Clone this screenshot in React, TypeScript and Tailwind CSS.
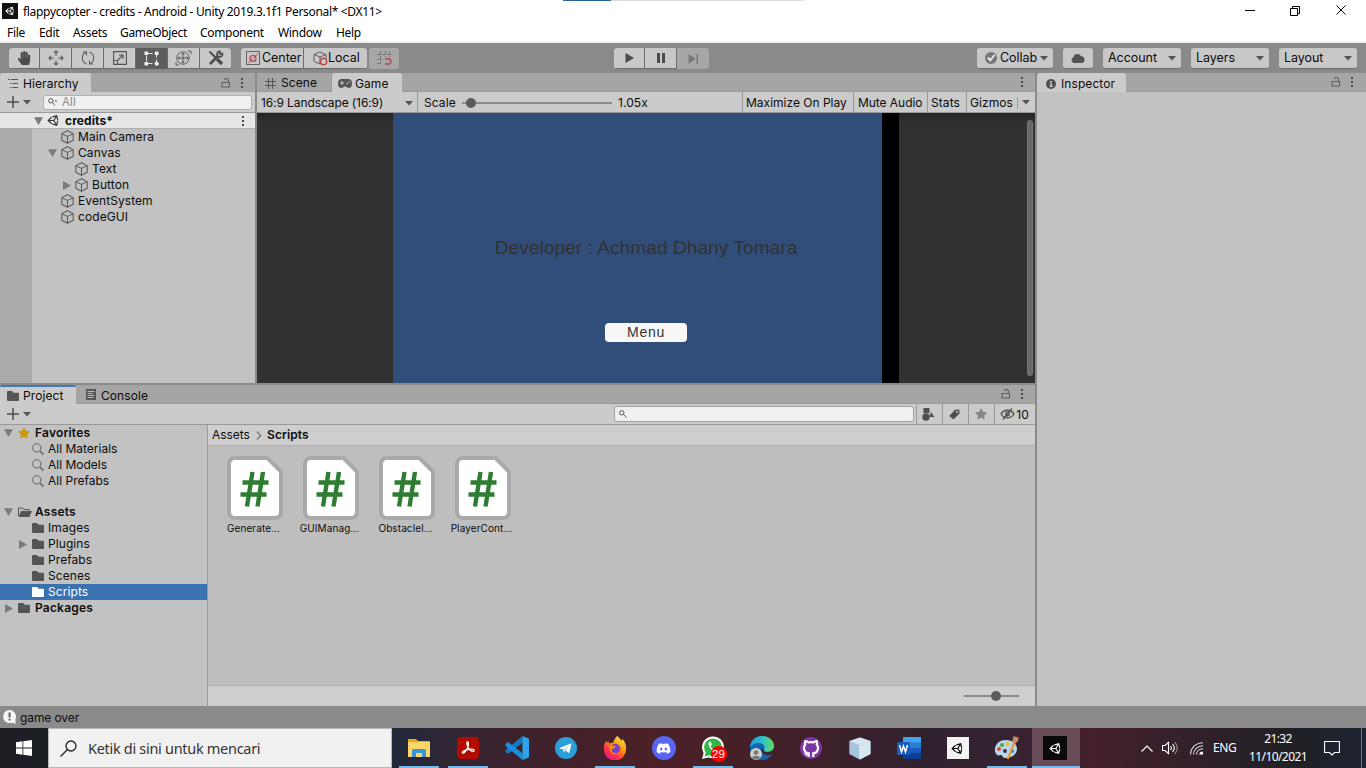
import React from "react";
import { FaUnity, FaHandPaper, FaDiscord, FaGithubAlt, FaStar } from "react-icons/fa";

type P = { className?: string };

const Tri = ({ className = "" }: P) => (
  <svg className={"shrink-0 " + className} width="8" height="5" viewBox="0 0 8 5"><path d="M0 0h8L4 4.6z" fill="#545454" /></svg>
);
const FoldOpen = ({ className = "" }: P) => (
  <svg className={"shrink-0 " + className} width="9" height="8" viewBox="0 0 9 8"><path d="M0 .3h9L4.5 8z" fill="#7a7a7a" /></svg>
);
const FoldClosed = ({ className = "" }: P) => (
  <svg className={"shrink-0 " + className} width="8" height="9" viewBox="0 0 8 9"><path d="M0 0v9l8-4.5z" fill="#7a7a7a" /></svg>
);
const Cube = ({ className = "" }: P) => (
  <svg className={"shrink-0 " + className} width="14" height="14" viewBox="0 0 14 14" fill="none" stroke="#575757" strokeWidth="1.05" strokeLinejoin="round">
    <path d="M7.5 .8l5.700 2.800v6.600L7.500 13.300 1.800 10.200V3.600zM1.800 3.600L7.500 6.400l5.700-2.800M7.500 6.400v6.900" />
  </svg>
);
const Folder = ({ white = false }: { white?: boolean }) => (
  <svg className="shrink-0" width="12" height="10" viewBox="0 0 12 10"><path d="M0 1a1 1 0 011-1h4.2l1.3 1.8H11a1 1 0 011 1V9a1 1 0 01-1 1H1a1 1 0 01-1-1z" fill={white ? "#fff" : "#555"} /></svg>
);
const FolderOpen = () => (
  <svg className="shrink-0" width="14" height="10" viewBox="0 0 14 10"><path d="M.5 9V1h4l1.2 1.5h5.3V4" fill="none" stroke="#555" /><path d="M3 4h11l-2.5 6H.5z" fill="#555" /></svg>
);
const Lock = ({ className = "" }: P) => (
  <svg className={"shrink-0 " + className} width="10" height="10" viewBox="0 0 10 10" fill="none" stroke="#616161" strokeWidth="1.1"><path d="M1 4.500h7.500v4.500H1zM7.500 4.500V2.500a2.200 2.200 0 00-4.300-.6" /></svg>
);
const Dots = ({ className = "" }: P) => (
  <svg className={"shrink-0 " + className} width="2" height="10" viewBox="0 0 2 10" fill="#4c4c4c"><path d="M0 0h2v2H0zM0 4h2v2H0zM0 8h2v2H0z" /></svg>
);
const PlusMenu = () => (
  <div className="flex w-[24px] items-center">
    <svg width="12" height="12" viewBox="0 0 12 12" stroke="#4f4f4f" strokeWidth="1.5"><path d="M6 0v12M0 6h12" /></svg>
    <Tri className="ml-1" />
  </div>
);
const Lens = ({ className = "" }: P) => (
  <svg className={"shrink-0 " + className} width="12" height="12" viewBox="0 0 12 12" fill="none" stroke="#636363"><circle cx="4.8" cy="4.8" r="4.2" /><path d="M8 8l3.6 3.6" strokeWidth="1.5" /></svg>
);

function TitleBar() {
  return (
    <div className="flex h-[43px] flex-col border-b-2 border-[#f0f0f0] bg-white text-black">
      <div className="flex h-[22px]">
        <div className="mt-[3px] ml-[2px] flex size-4 items-center justify-center bg-[#111] text-white"><FaUnity size={10} /></div>
        <span className="ml-[5px] w-[540px] pt-[3px] font-['Noto_Sans',sans-serif] text-[12px] leading-[18px] tracking-[-0.32px] whitespace-nowrap">
          flappycopter - credits - Android - Unity 2019.3.1f1 Personal* &lt;DX11&gt;
        </span>
        <div className="h-px w-[48px] bg-[#2a6396]" />
        <div className="h-px w-[193px] bg-[#dedede]" />
        <svg className="ml-[440px]" width="106" height="22" viewBox="0 0 106 22" fill="none" stroke="#000">
          <path d="M1 10.5h10M46.500 8.500h7v7h-7zM48.500 8V6.500h7v7H54M92.500 5.500l9 9M101.500 5.500l-9 9" />
        </svg>
      </div>
      <div className="flex h-[19px] pl-[7px] font-['Noto_Sans',sans-serif] text-[12px] leading-[21px] tracking-[-0.32px]">
        <span className="w-[32px]">File</span><span className="w-[34px]">Edit</span><span className="w-[47px]">Assets</span>
        <span className="w-[80px]">GameObject</span><span className="w-[78px]">Component</span><span className="w-[58px]">Window</span><span>Help</span>
      </div>
    </div>
  );
}

const btn = "flex h-[21px] items-center bg-[#c8c8c8] border-b border-[#6c6c6c] ";

function Toolbar() {
  return (
    <div className="flex h-[30px] items-start bg-[#8a8a8a] pt-[5px] text-[12.5px] tracking-[-0.05px]">
      <div className="ml-[9px] flex w-[222px] gap-px overflow-hidden rounded-[3px] bg-[#6c6c6c]">
        <div className={btn + "w-[30px] justify-center"}><FaHandPaper size={14} color="#4b4b4b" /></div>
        <div className={btn + "w-[31px] justify-center"}>
          <svg width="16" height="16" viewBox="0 0 16 16" fill="none" stroke="#5e5e5e" strokeWidth="1.100"><path d="M8 1v5M8 10v5M1 8h5M10 8h5M6 3l2-2 2 2M6 13l2 2 2-2M3 6L1 8l2 2M13 6l2 2-2 2" /></svg>
        </div>
        <div className={btn + "w-[31px] justify-center"}>
          <svg width="16" height="16" viewBox="0 0 16 16" fill="none" stroke="#5e5e5e" strokeWidth="1.1"><path d="M6.500 14C1 12 1 4.500 6.200 2M3 2h3.500v3.500M9.500 2c5.500 2 5.500 9.500.3 12M13 14H9.500v-3.500" /></svg>
        </div>
        <div className={btn + "w-[31px] justify-center"}>
          <svg width="14" height="14" viewBox="0 0 14 14" fill="none" stroke="#545454" strokeWidth="1.1"><path d="M.6.6h12.800v12.800H.600zM5 9l4.500-4.500M6 4h4v4M.6 9.500h4v4" /></svg>
        </div>
        <div className="flex h-[21px] w-[31px] items-center justify-center bg-[#5d5d5d]">
          <svg width="15" height="15" viewBox="0 0 15 15"><path d="M2.500 2.500h10v10h-10z" fill="none" stroke="#e4e4e4" strokeDasharray="6 2" /><path d="M.5.500h3.500v3.500H.500zM11 .5h3.500v3.500H11zM.5 11h3.500v3.500H.500zM11 11h3.500v3.500H11z" fill="#eee" /></svg>
        </div>
        <div className={btn + "w-[31px] justify-center"}>
          <svg width="17" height="16" viewBox="0 0 17 16" fill="none" stroke="#555"><circle cx="8" cy="8" r="6.200" /><path d="M8 3v10M3 8h10M6.500 4.500L8 3l1.500 1.500M6.500 11.500L8 13l1.500-1.500M4.500 6.500L3 8l1.500 1.500M11.500 6.500L13 8l-1.500 1.500M12.500 1H16v3M1 12v3h3" /></svg>
        </div>
        <div className={btn + "flex-1 justify-center"}>
          <svg width="16" height="16" viewBox="0 0 16 16" fill="none" stroke="#4c4c4c"><path d="M1.500 1.500l6 6" strokeWidth="2" /><path d="M9 9l5 5" strokeWidth="3.200" /><path d="M2 14l8-8" strokeWidth="2.600" /><path d="M14.500 3.500a2.800 2.800 0 11-2.500-2.200L11.500 4z" strokeWidth="1.600" /></svg>
        </div>
      </div>
      <div className="ml-[10px] flex w-[126px] gap-px overflow-hidden rounded-[3px] bg-[#6c6c6c]">
        <div className={btn + "w-[62px] pl-[5px]"}>
          <svg className="shrink-0" width="14" height="14" viewBox="0 0 14 14" fill="none"><path d="M.5.500h13v13H.500z" stroke="#626262" /><circle cx="7" cy="7.500" r="3" stroke="#bd3b43" strokeWidth="1.200" /><path d="M2.500 12L12 2.500" stroke="#bd3b43" /></svg>
          <span className="ml-[2px]">Center</span>
        </div>
        <div className={btn + "flex-1 pl-[9px]"}>
          <svg className="shrink-0" width="15" height="15" viewBox="0 0 15 15" fill="none" stroke="#5c5c5c"><path d="M7 13L1 10.500V3.500L6.500 1l6.500 2.500v4M1 3.500l6 2.500 6-2.500M7 6v7" /><circle cx="10.500" cy="10.500" r="3.200" fill="#c8c8c8" stroke="#bd3b43" strokeWidth="1.300" /></svg>
          <span>Local</span>
        </div>
      </div>
      <div className="ml-[2px] flex h-[21px] w-[30px] items-center justify-center rounded-[3px] bg-[#a7a7a7]">
        <svg width="15" height="15" viewBox="0 0 15 15" fill="none" stroke="#777"><path d="M3.500 0v12M8.500 0v6M12.500 0v6M0 3.500h14M0 8.500h6M0 12.500h4" strokeDasharray="4 1" /><path d="M8 8h3.500a2.500 2.500 0 010 5H8" stroke="#b65a60" strokeWidth="1.800" /></svg>
      </div>
      <div className="ml-[215px] flex w-[95px] gap-px overflow-hidden rounded-[3px] bg-[#6c6c6c]">
        <div className={btn + "w-[30px] justify-center"}><svg width="9" height="10" viewBox="0 0 9 10"><path d="M.5 0v10L9 5z" fill="#4b4b4b" /></svg></div>
        <div className={btn + "w-[31px] justify-center"}><svg width="8" height="10" viewBox="0 0 8 10"><path d="M0 0h3v10H0zM5 0h3v10H5z" fill="#4b4b4b" /></svg></div>
        <div className="flex h-[21px] flex-1 items-center justify-center bg-[#a7a7a7]"><svg width="11" height="10" viewBox="0 0 11 10"><path d="M.5 0v10L7.500 5zM8.500 0H10v10H8.500z" fill="#777" /></svg></div>
      </div>
      <div className={btn + "ml-[268px] w-[76px] rounded-[3px] pl-[8px]"}>
        <svg className="shrink-0" width="12" height="12" viewBox="0 0 12 12"><circle cx="6" cy="6" r="6" fill="#777" /><path d="M2.800 5.500L5.300 8.300 9.500 3" fill="none" stroke="#eee" strokeWidth="1.900" /></svg>
        <span className="ml-[3px] w-[40px]">Collab</span><Tri />
      </div>
      <div className={btn + "ml-[10px] w-[30px] justify-center rounded-[3px]"}>
        <svg width="14" height="10" viewBox="0 0 14 10"><path d="M3 10a3 3 0 01-.500-5.800 4 4 0 017.600-.9A3.400 3.400 0 0111 10z" fill="#525252" /></svg>
      </div>
      {["Account", "Layers", "Layout"].map((t) => (
        <div key={t} className={btn + "ml-[10px] w-[78px] justify-between rounded-[3px] pr-[5px] pl-[5px]"}><span>{t}</span><Tri /></div>
      ))}
    </div>
  );
}

const tabBar = "flex h-[19px] shrink-0 bg-[#a5a5a5] ";
const row = "flex h-[16px] shrink-0 items-center whitespace-nowrap ";

function Hierarchy() {
  return (
    <section className="flex w-[257px] shrink-0 flex-col border-r-2 border-[#8a8a8a] bg-[#c2c2c2]">
      <div className={tabBar + "items-center"}>
        <div className="flex h-full w-[91px] items-center rounded-t-[3px] bg-[#cbcbcb] pt-[2px] pl-[8px]">
          <svg width="10" height="9" viewBox="0 0 10 9" stroke="#555"><path d="M0 .5h2M3 .5h7M2 4.500h1.500M4.500 4.500H10M2 8.500h1.500M4.500 8.500H10" /></svg>
          <span className="ml-[5px]">Hierarchy</span>
        </div>
        <Lock className="ml-[130px]" /><Dots className="ml-[10px]" />
      </div>
      <div className="flex h-[21px] shrink-0 items-center border-b border-[#999] bg-[#cbcbcb] pl-[7px]">
        <PlusMenu />
        <div className="ml-[12px] flex h-[15px] w-[209px] items-center rounded-[3px] border border-[#b0b0b0] bg-[#f0f0f0] pl-[4px] text-[#8b8b8b]">
          <svg width="10" height="8" viewBox="0 0 10 8" fill="none" stroke="#555"><circle cx="2.800" cy="2.800" r="2.200" /><path d="M4.500 4.500l2.500 2.800" /><path d="M6.500 2.500h3l-1.500 1.500z" fill="#555" stroke="none" /></svg>
          <span className="ml-[4px] text-[11.5px]">All</span>
        </div>
      </div>
      <div className={row + "border-b border-[#b0b0b0] bg-[#e6e6e6] pl-[34px] font-bold"}>
        <FoldOpen /><FaUnity size={13} color="#333" className="ml-[4px]" /><span className="ml-[5px] w-[177px] text-[12px]">credits*</span><Dots />
      </div>
      <div className="flex flex-1">
        <div className="w-[32px] bg-[#aaaaaa]" />
        <div className="flex flex-1 flex-col gap-0">
          <div className={row + "pl-[28px]"}><Cube /><span className="ml-[4px]">Main Camera</span></div>
          <div className={row + "pl-[16px]"}><FoldOpen /><Cube className="ml-[3px]" /><span className="ml-[4px]">Canvas</span></div>
          <div className={row + "pl-[42px]"}><Cube /><span className="ml-[4px]">Text</span></div>
          <div className={row + "pl-[31px]"}><FoldClosed /><Cube className="ml-[3px]" /><span className="ml-[4px]">Button</span></div>
          <div className={row + "pl-[28px]"}><Cube /><span className="ml-[4px]">EventSystem</span></div>
          <div className={row + "pl-[28px]"}><Cube /><span className="ml-[4px]">codeGUI</span></div>
        </div>
      </div>
    </section>
  );
}

function Game() {
  const cell = "flex h-full shrink-0 items-center border-r border-[#999] pt-[2px] whitespace-nowrap ";
  return (
    <section className="flex flex-1 flex-col">
      <div className={tabBar + "items-center"}>
        <div className="flex h-full w-[75px] items-center border-b border-r border-[#999] pt-[2px] pl-[8px]">
          <svg width="11" height="11" viewBox="0 0 11 11" stroke="#555"><path d="M3.500 0v11M7.500 0v11M0 3.500h11M0 7.500h11" /></svg>
          <span className="ml-[5px]">Scene</span>
        </div>
        <div className="flex h-full w-[70px] items-center rounded-t-[3px] bg-[#cbcbcb] pt-[2px] pl-[6px]">
          <svg width="14" height="9" viewBox="0 0 14 9"><path d="M3.500 0h7a3.500 4.500 0 010 9c-1.500 0-2-1.500-3.500-1.500S5 9 3.500 9a3.500 4.500 0 010-9z" fill="#555" /><path d="M2 4h4M4 2v4" stroke="#c8c8c8" /><circle cx="9.300" cy="4.500" r=".8" fill="#c8c8c8" /><circle cx="11.300" cy="3" r=".8" fill="#c8c8c8" /></svg>
          <span className="ml-[3px]">Game</span>
        </div>
        <div className="h-full flex-1 border-b border-[#999]" />
        <div className="flex h-full items-center border-b border-[#999] pr-[12px]"><Dots /></div>
      </div>
      <div className="flex h-[21px] shrink-0 items-center border-b border-[#999] bg-[#cbcbcb]">
        <div className={cell + "w-[161px] justify-between pr-[4px] pl-[4px]"}><span className="tracking-[-0.1px]">16:9 Landscape (16:9)</span><Tri /></div>
        <div className={cell + "w-[325px] pl-[6px]"}>
          <span className="w-[38px]">Scale</span>
          <svg width="150" height="10" viewBox="0 0 150 10"><path d="M0 5h150" stroke="#8b8b8b" strokeWidth="2" /><circle cx="9" cy="5" r="5" fill="#5b5b5b" /></svg>
          <span className="ml-[6px]">1.05x</span>
        </div>
        <div className={cell + "w-[111px] pl-[3px] tracking-[0px]"}>Maximize On Play</div>
        <div className={cell + "w-[74px] pl-[4px] tracking-[-0.05px]"}>Mute Audio</div>
        <div className={cell + "w-[39px] pl-[3px]"}>Stats</div>
        <div className="flex items-center pt-px pl-[3px]"><span className="w-[47px]">Gizmos</span><div className="mr-[4px] h-[12px] w-px bg-[#999]" /><Tri /></div>
      </div>
      <div className="flex h-[270px] bg-[linear-gradient(#242424,#313131_10px)]">
        <div className="w-[136px]" />
        <div className="flex w-[489px] flex-col items-center bg-[#314d79] pt-[124px] pl-[17px] font-['Liberation_Sans',Arial,sans-serif] text-[#323232]">
          <div className="text-[19px] leading-[22px] tracking-[0.1px] whitespace-nowrap">Developer : Achmad Dhany Tomara</div>
          <div className="mt-[64px] flex h-[19px] w-[82px] items-center justify-center rounded-[4px] bg-[#f7f7f7] pb-px text-[14px] tracking-[0.7px]">Menu</div>
        </div>
        <div className="w-[17px] bg-black" />
        <div className="flex flex-1 justify-end pt-[7px] pr-[2px]"><div className="h-[256px] w-[6px] rounded-full border border-[#777] bg-[#686868]" /></div>
      </div>
    </section>
  );
}

function ProjectTree() {
  return (
    <div className="flex w-[208px] shrink-0 flex-col border-r border-[#999] bg-[#c2c2c2]">
      <div className={row + "pl-[4px] font-semibold tracking-[0.200px]"}><FoldOpen /><FaStar size={12} color="#c99b0c" className="ml-[5px]" /><span className="ml-[5px]">Favorites</span></div>
      {["All Materials", "All Models", "All Prefabs"].map((t) => (
        <div key={t} className={row + "pl-[32px] tracking-[0px]"}><Lens /><span className="ml-[4px]">{t}</span></div>
      ))}
      <div className="h-[15px]" />
      <div className={row + "pl-[4px] font-semibold tracking-[0.200px]"}><FoldOpen className="mr-[5px]" /><FolderOpen /><span className="ml-[3px]">Assets</span></div>
      <div className={row + "pl-[32px]"}><Folder /><span className="ml-[4px]">Images</span></div>
      <div className={row + "pl-[19px]"}><FoldClosed className="mr-[5px]" /><Folder /><span className="ml-[4px]">Plugins</span></div>
      <div className={row + "pl-[32px]"}><Folder /><span className="ml-[4px]">Prefabs</span></div>
      <div className={row + "pl-[32px]"}><Folder /><span className="ml-[4px]">Scenes</span></div>
      <div className={row + "bg-[#3a72b0] pl-[32px] text-white"}><Folder white /><span className="ml-[4px]">Scripts</span></div>
      <div className={row + "pl-[5px] font-semibold tracking-[0.200px]"}><FoldClosed className="mr-[5px]" /><Folder /><span className="ml-[5px]">Packages</span></div>
    </div>
  );
}

function Script({ name }: { name: string }) {
  return (
    <div className="flex w-[76px] flex-col items-center">
      <svg width="56" height="64" viewBox="0 0 56 64">
        <path d="M8 2h32.500L54 15.500V56a6 6 0 01-6 6H8a6 6 0 01-6-6V8a6 6 0 016-6z" fill="#fff" stroke="#a9a9a9" strokeWidth="4" />
        <path d="M25.500 16L20 50.500M36 16l-5.500 34.500M15.500 26.500h26M13.500 38.500h26" stroke="#2f7d32" strokeWidth="4.400" fill="none" />
      </svg>
      <span className="mt-px pr-[3px] text-[10px] leading-[14px] tracking-[0.1px] whitespace-nowrap">{name}</span>
    </div>
  );
}

function Project() {
  const sep = "flex h-full items-center justify-center border-l border-[#999] ";
  return (
    <section className="flex h-[323px] flex-col border-t-2 border-r-2 border-[#8a8a8a] bg-[#bebebe]">
      <div className={tabBar + "items-center"}>
        <div className="flex h-full w-[76px] items-center rounded-t-[2px] border-t-2 border-[#4678b0] bg-[#cbcbcb] pl-[7px]">
          <Folder /><span className="ml-[4px]">Project</span>
        </div>
        <div className="flex h-full flex-1 items-center border-b border-[#999] pt-[2px] pl-[10px]">
          <svg className="mb-[2px]" width="10" height="11" viewBox="0 0 10 11"><path d="M0 0h10v11H0z" fill="#555" /><path d="M1.500 2.500h7M1.500 4.500h5M1.500 6.500h7M1.500 8.500h6" stroke="#bbb" /></svg>
          <span className="ml-[5px] pt-px">Console</span>
          <Lock className="mb-[2px] ml-auto" /><Dots className="mr-[12px] mb-[2px] ml-[10px]" />
        </div>
      </div>
      <div className="flex h-[21px] shrink-0 items-center border-b border-[#999] bg-[#cbcbcb] pl-[7px]">
        <PlusMenu />
        <div className="ml-[583px] flex h-[16px] w-[300px] items-center rounded-[3px] border border-[#a0a0a0] bg-[#f0f0f0] pl-[4px]">
          <svg width="8" height="8" viewBox="0 0 8 8" fill="none" stroke="#555"><circle cx="2.800" cy="2.800" r="2.200" /><path d="M4.500 4.500l3 3" /></svg>
        </div>
        <div className={sep + "ml-[2px] w-[26px] pr-[2px]"}><svg width="13" height="13" viewBox="0 0 13 13" fill="#4f4f4f"><path d="M1.500 0h6v5h-6zM9 4l3.500 5h-5z" /><circle cx="4" cy="9" r="3.700" /></svg></div>
        <div className={sep + "w-[26px] pr-[3px]"}><svg width="11" height="11" viewBox="0 0 11 11"><path d="M.3 7L6 .8 10.300.500l.2 4L4.500 10.500z" fill="#4f4f4f" /><circle cx="8" cy="3" r="1" fill="#cbcbcb" /></svg></div>
        <div className={sep + "w-[26px] pr-[2px]"}><FaStar size={12} color="#888" /></div>
        <div className={sep + "flex-1 pr-px"}>
          <svg width="15" height="12" viewBox="0 0 15 12" fill="none" stroke="#4f4f4f" strokeWidth="1.300"><path d="M1 6c3-5 10-5 13 0-3 5-10 5-13 0zM3 11.500L12 .5" /><circle cx="7.500" cy="6" r="1.800" /></svg>
          <span className="ml-[1px] pt-px">10</span>
        </div>
      </div>
      <div className="flex flex-1">
        <ProjectTree />
        <div className="flex flex-1 flex-col">
          <div className="flex h-[21px] items-center border-b border-[#b0b0b0] bg-[#cecece] pl-[4px]">
            <span className="w-[37px] tracking-[-0.050px]">Assets</span>
            <svg className="ml-[7px]" width="6" height="9" viewBox="0 0 6 9"><path d="M.8.500l4 4-4 4" fill="none" stroke="#777" strokeWidth="1.300" /></svg>
            <span className="ml-[5px] font-semibold">Scripts</span>
          </div>
          <div className="flex flex-1 pt-[10px] pl-[9px]">
            {["Generate...", "GUIManag...", "Obstaclel...", "PlayerCont..."].map((n) => <Script key={n} name={n} />)}
          </div>
          <div className="flex h-[21px] items-center justify-end border-t border-[#b0b0b0] bg-[#cecece] pr-[16px]">
            <svg width="55" height="10" viewBox="0 0 55 10"><path d="M0 5h55" stroke="#8b8b8b" strokeWidth="2" /><circle cx="32" cy="5" r="5" fill="#5b5b5b" /></svg>
          </div>
        </div>
      </div>
    </section>
  );
}

function Inspector() {
  return (
    <section className="flex w-[329px] shrink-0 flex-col bg-[#c2c2c2]">
      <div className={tabBar + "items-center"}>
        <div className="flex h-full w-[89px] items-center rounded-t-[3px] bg-[#cbcbcb] pt-[2px] pl-[9px]">
          <svg width="10" height="10" viewBox="0 0 10 10"><circle cx="5" cy="5" r="5" fill="#4f4f4f" /><path d="M4 2h2v1.500H4zM3.500 4.500H6V7h1v1H3.500V7h1V5.500h-1z" fill="#cbcbcb" /></svg>
          <span className="ml-[5px]">Inspector</span>
        </div>
        <div className="flex h-full flex-1 items-center justify-end border-b border-[#999] pr-[13px]"><Lock className="mr-[10px]" /><Dots /></div>
      </div>
    </section>
  );
}

const Explorer = () => (
  <svg width="22" height="20" viewBox="0 0 22 20"><path d="M0 1h8l2 2h12v16H0z" fill="#e8ac1c" /><path d="M0 4h22v15H0z" fill="#fcd569" /><path d="M4 19v-6a2 2 0 012-2h10a2 2 0 012 2v6h-4v-4H8v4z" fill="#3a93d6" /></svg>
);
const Acrobat = () => (
  <svg width="22" height="22" viewBox="0 0 22 22"><rect width="22" height="22" rx="4" fill="#b30b00" /><path d="M10.500 5c1.500 0 1 4-.3 6.500S6.800 17 5.500 16c-1.200-1.200 3-3.200 6.500-3.700s5.500.2 5 1.500-3.500.2-5-2S9 5 10.500 5z" fill="none" stroke="#fff" strokeWidth="1.300" /></svg>
);
const Code = () => (
  <svg width="24" height="24" viewBox="0 0 24 24"><path d="M17.500 0v6.800L3 18l-2.500-2.200V14z" fill="#0f78c4" /><path d="M17.500 24v-6.800L3 6 .5 8.200V10z" fill="#1b8fdc" /><path d="M17.500 0L24 2.800v18.400L17.500 24z" fill="#2ba3ee" /></svg>
);
const Telegram = () => (
  <svg width="22" height="22" viewBox="0 0 22 22"><circle cx="11" cy="11" r="11" fill="#2a9fd8" /><path d="M4 11.300L16.500 6.300 14.300 16.300 10.500 13.500 8.700 15.500 8.400 12.500z" fill="#fff" /><path d="M8.400 12.500l6-4.500-3.900 5.500-1.800 2z" fill="#b9d9ec" /></svg>
);
const Firefox = () => (
  <svg width="24" height="24" viewBox="0 0 24 24">
    <defs><linearGradient id="ff" x1=".9" y1="0" x2=".2" y2="1"><stop stopColor="#fff44f" /><stop offset=".4" stopColor="#ff980e" /><stop offset=".7" stopColor="#ff3647" /><stop offset="1" stopColor="#e31587" /></linearGradient></defs>
    <path d="M14 0c3 2 4 4 4.500 5l1-2c2.500 3 4 6 3.500 10a11 11 0 01-22 1C.5 10 1.500 7 3.500 4.500V7L5.500 5 6 7.500c2-1 3-1 4-.5C11 4 12 2 14 0z" fill="url(#ff)" />
    <circle cx="12.500" cy="12.500" r="4.700" fill="#7542c8" /><path d="M6 10c2-1 4.500 0 7 .5-1 2-2.500 1.500-4 2.500-1 3 2 4.500 5 4-3 3-8 0-8-7z" fill="#ff8a16" />
  </svg>
);
const DiscordIcon = () => <div className="flex size-6 items-center justify-center rounded-full bg-[#5865f2] text-white"><FaDiscord size={15} /></div>;
const WhatsApp = () => (
  <div className="relative">
    <svg width="24" height="24" viewBox="0 0 24 24"><circle cx="12" cy="11.300" r="10.900" fill="#fff" /><path d="M1 23l2-7.500 6 5.500z" fill="#fff" /><circle cx="12" cy="11.300" r="8.900" fill="#2fb842" /><path d="M3.600 20.400l1.200-4.500 3.500 3.300z" fill="#2fb842" /><path d="M8 6c-2 3 2.500 10 8 10l1.500-2.500-3-1.500-1.500 1.500c-2-1-3-2-3.500-3.500L11 8.500 9.500 5.500z" fill="#fff" /></svg>
    <span className="absolute top-[10px] left-[10px] flex size-[16px] items-center justify-center rounded-full bg-[#f00] font-['Liberation_Sans',Arial,sans-serif] text-[11.500px] tracking-normal text-white">29</span>
  </div>
);
const Edge = () => (
  <div className="relative">
    <svg width="24" height="24" viewBox="0 0 24 24">
      <defs><linearGradient id="ed"><stop stopColor="#229de0" /><stop offset=".55" stopColor="#2fc4c8" /><stop offset="1" stopColor="#64dd56" /></linearGradient></defs>
      <circle cx="12" cy="12" r="12" fill="#1565b3" />
      <path d="M0 12C0 5 5 0 12 0s12 5 12 9.500c0 4-3 6.500-7 6.500-3 0-4-1-3-2.500 2-3-1-6.500-5-6.500-4 0-8 2-9 5z" fill="url(#ed)" />
      <path d="M11 13c0 5 6 8 12 5l1-2v-4c-1 3-4 4-7 4-3 0-4-1-3-2.500z" fill="#3a2630" />
    </svg>
    <svg className="absolute top-[12px] left-0" width="12" height="12" viewBox="0 0 12 12"><circle cx="6" cy="6" r="6" fill="#ccc" /><circle cx="6" cy="4.500" r="2.300" fill="#777" /><path d="M2 10c1-3 7-3 8 0-2 2-6 2-8 0z" fill="#777" /></svg>
  </div>
);
const Github = () => (
  <svg width="22" height="22" viewBox="0 0 22 22"><circle cx="11" cy="11" r="11" fill="#7c35a5" /><path d="M8.700 20v-3.700C5.500 16 4 14 4 10.800c0-1.500.4-2.500 1.200-3.400-.3-1-.2-2.400.2-3.300 1.300 0 2.400.7 3.200 1.300 1.500-.4 3.300-.4 4.800 0 .8-.6 1.900-1.300 3.200-1.300.4.9.5 2.300.2 3.300.8.9 1.200 1.900 1.200 3.400 0 3.200-1.500 5.200-4.700 5.500V20" fill="#7c35a5" stroke="#fff" strokeWidth="2.200" /><path d="M8.500 18.300c-2.500.4-2.800-1.600-4-1.900" fill="none" stroke="#fff" strokeWidth="1.300" /></svg>
);
const VBox = () => (
  <svg width="22" height="23" viewBox="0 0 22 23"><path d="M11 .5L21.500 4v13L11 22.500.500 17V4z" fill="#7da9c9" /><path d="M11 .5L21.500 4 11 9 .5 4z" fill="#d8e9ee" /><path d="M.5 4L11 9v13.500L.500 17z" fill="#a4c5dd" /><path d="M11 9l10.500-5v13L11 22.500z" fill="#d5e9f0" /><path d="M11 9v13" stroke="#eef7fb" /></svg>
);
const Word = () => (
  <svg width="24" height="22" viewBox="0 0 24 22"><path d="M6 0h18v6H6z" fill="#41a5ee" /><path d="M6 5.500h18V11H6z" fill="#2b7cd3" /><path d="M6 11h18v5.500H6z" fill="#185abd" /><path d="M6 16.500h18V22H6z" fill="#103f91" /><rect y="5" width="13" height="13" rx="1" fill="#185abd" /><path d="M2.500 8l2 7L6.500 9l2 6 2-7" fill="none" stroke="#fff" strokeWidth="1.500" /></svg>
);
const Paint = () => (
  <svg width="25" height="24" viewBox="0 0 25 24"><path d="M12 4c7 0 11 4 11 9s-5 9-12 9c-3 0-2-3-4-3s-2 1-4 0C-2 14 2 4 12 4z" fill="#b8d9ec" /><circle cx="5" cy="13" r="2" fill="#d84a3a" /><circle cx="8" cy="9" r="2" fill="#51a843" /><circle cx="13.500" cy="8" r="2" fill="#edb92e" /><circle cx="11" cy="15" r="2" fill="#3a3038" /><circle cx="18" cy="15" r="2" fill="#3b74c8" /><path d="M12.500 23L19 7l2 1-6 15z" fill="#e99b32" /><path d="M19 7c-1-3 0-4 .5-7 2 1 5 1 5 2 0 3-1.500 4-3.500 6z" fill="#c68b63" /></svg>
);

function Taskbar() {
  const apps: [React.ReactNode, boolean][] = [
    [<Explorer />, true], [<Acrobat />, true], [<Code />, false], [<Telegram />, false], [<Firefox />, true], [<DiscordIcon />, false], [<WhatsApp />, true],
    [<Edge />, false], [<Github />, false], [<VBox />, false], [<Word />, false],
    [<div className="flex size-[22px] items-center justify-center bg-[#f3f3f3] text-black"><FaUnity size={13} /></div>, false], [<Paint />, true],
  ];
  return (
    <div className="flex h-[40px] bg-[linear-gradient(90deg,#1d1e24_0px,#22293a_395px,#3b222e_500px,#4c2127_650px,#422029_790px,#30212e_930px,#342332_1000px,#45202d_1090px,#30202a_1200px,#202025_1290px,#1c2431_1366px)] font-['Noto_Sans',sans-serif] text-white">
      <div className="flex w-[48px] items-center justify-center">
        <svg width="16" height="16" viewBox="0 0 16 16" fill="#fff"><path d="M0 2.300L6.500 1.300v6.300H0zM7.300 1.200L16 0v7.600H7.300zM0 8.400h6.500v6.300L0 13.700zM7.300 8.400H16V16l-8.700-1.200z" /></svg>
      </div>
      <div className="flex w-[344px] items-center border border-[#b7b7b7] bg-[#f1f1f1] pl-[11px] text-[#333]">
        <svg width="17" height="17" viewBox="0 0 17 17" fill="none" stroke="#222" strokeWidth="1.300"><circle cx="11" cy="6" r="5" /><path d="M7.500 9.500L.500 16.500" /></svg>
        <span className="ml-[11px] text-[14.5px] tracking-[-0.3px]">Ketik di sini untuk mencari</span>
      </div>
      <div className="ml-[2px] flex">
        {apps.map(([icon, on], i) => (
          <div key={i} className="flex w-[49px] flex-col items-center">
            <div className="flex h-[38px] items-center pt-[2px]">{icon}</div>
            {on && <div className="h-[2px] w-[40px] bg-[#76b9ed]" />}
          </div>
        ))}
        <div className="ml-px flex w-[48px] flex-col items-center bg-[#674c57]">
          <div className="flex h-[38px] items-center pt-[2px] pr-[2px]"><div className="flex size-6 items-center justify-center bg-[#0a0a0a]"><FaUnity size={13} /></div></div>
          <div className="h-[2px] w-full bg-[#76b9ed]" />
        </div>
      </div>
      <div className="flex flex-1 items-center text-[12px]">
        <svg className="ml-[61px]" width="12" height="7" viewBox="0 0 12 7" fill="none" stroke="#fff" strokeWidth="1.200"><path d="M.5 6.500L6 1l5.500 5.500" /></svg>
        <svg className="ml-[9px]" width="17" height="14" viewBox="0 0 17 14" fill="none" stroke="#fff" strokeWidth="1.100"><path d="M.5 4.500H3L6.500 1.500v11L3 9.500H.500zM8.500 5c1 1.200 1 2.800 0 4M10.500 3c2.200 2.400 2.200 5.600 0 8" /><path d="M12.800 1.200c3 3.500 3 8 0 11.600" stroke="#888" /></svg>
        <svg className="ml-[11px]" width="14" height="13" viewBox="0 0 14 13" fill="none" stroke="#ddd" strokeWidth="1.100"><path d="M.6 12.500C.5 6 6 .8 13 .8M3.500 12.500C3.500 8 7 4 13 3.800M6.500 12.500C6.500 9.500 9 7 13 6.800" /><path d="M9.300 12.500c0-2 1.500-3 3.700-3v3z" fill="#fff" stroke="none" /></svg>
        <span className="ml-[9px] w-[36px] tracking-[-0.4px]">ENG</span>
        <div className="flex w-[58px] flex-col items-center text-[12px] leading-[18px] tracking-[-0.6px] whitespace-nowrap"><span>21:32</span><span>11/10/2021</span></div>
        <svg className="ml-[17px]" width="16" height="16" viewBox="0 0 16 16" fill="none" stroke="#fff" strokeWidth="1.100"><path d="M.6 1.500h14.800v11H10.500L8 15l-2.500-2.500H.600z" /></svg>
        <div className="mr-[4px] ml-auto h-full w-px bg-[#77787c]" />
      </div>
    </div>
  );
}

export default function App() {
  return (
    <div className="flex h-[768px] w-[1366px] flex-col overflow-hidden bg-[#8a8a8a] font-[Inter,sans-serif] text-[12px] leading-[16px] tracking-[0.08px] text-[#0c0c0c]">
      <TitleBar />
      <Toolbar />
      <div className="flex h-[633px] shrink-0">
        <div className="flex w-[1037px] flex-col">
          <div className="flex h-[310px] border-r-2 border-[#8a8a8a]"><Hierarchy /><Game /></div>
          <Project />
        </div>
        <Inspector />
      </div>
      <div className="flex h-[22px] shrink-0 items-center bg-[#8a8a8a] pl-[3px]">
        <svg width="14" height="14" viewBox="0 0 14 14"><path d="M6.500 0a6.500 6.500 0 106 9.500V14l-3-1.500A6.500 6.500 0 0013 6.500 6.500 6.500 0 006.500 0z" fill="#f5f5f5" /><path d="M5.600 2.500h1.900v5H5.600zM5.600 8.700h1.900v1.700H5.600z" fill="#555" /></svg>
        <span className="ml-[3px] pt-[2px] tracking-[-0.1px]">game over</span>
      </div>
      <Taskbar />
    </div>
  );
}
